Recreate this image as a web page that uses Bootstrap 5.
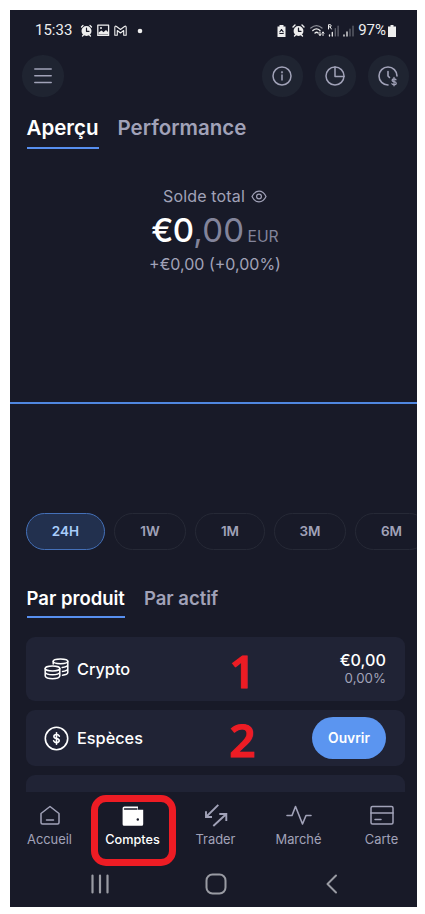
<!DOCTYPE html>
<html lang="fr">
<head>
<meta charset="utf-8">
<meta name="viewport" content="width=device-width, initial-scale=1">
<title>Comptes</title>
<link href="https://cdn.jsdelivr.net/npm/bootstrap@5.3.0/dist/css/bootstrap.min.css" rel="stylesheet">
<style>
body{background:#fff;font-family:Inter,"Liberation Sans",sans-serif;color:#fff}
svg{display:block;flex:none;fill:none;stroke:currentColor;stroke-linecap:round;stroke-linejoin:round;overflow:visible}
.phone{width:407px;height:897px;margin:10px 0 0 10px;background:#181a28;line-height:1}
.muted{color:#a1a2b8}
.status{height:40px;padding:1px 20px 0 25px;font-family:Roboto,sans-serif;font-size:15px;color:#eee}
.status svg{margin-left:5px}
.topbar{height:52px;padding:0 8px 0 12px}
.round-btn{width:41.5px;height:41.5px;background:#1f2431;color:#a1a2b8;border:0;padding:0}
.tabs-main{height:48px;padding-left:16.5px;gap:19px;font-size:20.5px;font-weight:600}
.tabs-sub{height:56px;padding-left:16.5px;gap:19px;font-size:18.5px;font-weight:600}
.tab-item{border-bottom:2.5px solid transparent;white-space:nowrap}
.tab-item.on{border-color:#578ff0;color:#fff}
.tabs-main .tab-item{height:47px;padding-top:15.5px}
.tabs-sub .tab-item{height:37px;padding-top:7.500px}
.balance{height:251.500px;padding:38px 0 0 3px}
.amount{font-size:33px;font-weight:500;letter-spacing:-.8px}
.amount .dec{font-weight:400;color:#83849a;letter-spacing:.3px}
.cur{font-size:15.700px;color:#83849a}
.chart{height:111.500px;border-top:2px solid #5087e0}
.ranges{height:68px;gap:9px;padding-left:16px}
.range{height:37px;border:1px solid #262936;color:#a1a2b8;font-size:13.5px;font-weight:600;flex:none}
.range.on{background:#22304e;border-color:#4470b8;color:#a9cdfb}
.product{background:#202335;border-radius:9px;margin:0 12px 9px 16px;padding:0 19px 0 18px}
.pname{font-size:16.300px;font-weight:500}
.open-btn{width:74px;height:42px;background:#5b95f0;font-size:13.800px;font-weight:600}
.note{top:50%;left:203px;transform:translateY(-48%);font:600 46px "Open Sans","Noto Sans",sans-serif;color:#ed1c24;line-height:1;-webkit-text-stroke:1.200px #ed1c24}
.tabbar{height:70px;padding:12px 0 0 4px;font-size:12.900px}
.tabbar .cell{width:83px;gap:7.500px;flex:none}
.ring{left:0;top:-9px;width:85px;height:71px;border:7px solid #ed1c24;border-radius:15px}
.sysnav{height:44px;color:#999ba3}
</style>
</head>
<body>
<main class="phone d-flex flex-column overflow-hidden">
  <div class="status d-flex align-items-center">
    <span>15:33</span>
    <svg class="ms-2" width="13" height="13" viewBox="0 0 13 13"><circle cx="6.5" cy="7" r="5" fill="#eee" stroke="none"/><path d="M1.500 3l1.500-1.500M11.500 3L10 1.500M2.500 12l1-1M10.500 12l-1-1" stroke-width="1.300"/><path d="M6.5 4.2V7.3H9" stroke="#181a28" stroke-width="1.2"/></svg>
    <svg style="margin-left:4px" width="13" height="13" viewBox="0 0 13 13"><rect x=".8" y="1.2" width="10.800" height="10.2" stroke-width="1.3"/><path d="M1.500 10.500V8.5L4.5 6.500 6.5 8.300 9 6 11 8v2.500z" fill="#eee" stroke="none"/><circle cx="4" cy="4" r="1" fill="#eee" stroke="none"/></svg>
    <svg style="margin-left:4px" width="14" height="12" viewBox="0 0 14 12"><path d="M.8 10.300V2.500Q1 .5 2.500 1.500L6.500 4.500l4-3q1.500-1 1.700 1v7.800H9.700V5.500L6.500 8 3.300 5.500v4.800z" stroke-width="1.100"/></svg>
    <svg style="margin-left:8.500px" width="6" height="6"><circle cx="3" cy="3" r="2.300" fill="#eee" stroke="none"/></svg>
    <svg class="ms-auto" width="9" height="12" viewBox="0 0 9 12"><path d="M2.500 0h4v1.500H8.500V12H.5V1.500h2z" fill="#eee" stroke="none"/><path d="M4.500 4.500L6.200 6.800M4.500 4.500L2.900 6.800M2.800 8.500h3.500" stroke="#181a28" stroke-width="1.100"/></svg>
    <svg style="margin-left:6px" width="13" height="13" viewBox="0 0 13 13"><circle cx="6.500" cy="7" r="4.900" fill="#eee" stroke="none"/><path d="M1 3l2-2M12 3l-2-2M2.500 12l1-1M10.500 12l-1-1" stroke-width="1.400"/><path d="M6.500 4.200V7.300H9" stroke="#181a28" stroke-width="1.300"/></svg>
    <svg width="15" height="13" viewBox="0 0 15 13"><path d="M.8 4Q6.500-.8 12 4" stroke="#8b8d96" stroke-width="1.200"/><path d="M2.800 6.500q3.700-3.300 7.200 0M5 9q1.700-1.500 3.200 0" stroke-width="1.300"/><path d="M10 8v3.500M13 8v3.500M9 10.300l1 1.200 1-1.200M12 9.200L13 8l1 1.200" stroke-width="1"/></svg>
    <svg style="margin-left:3px" width="11" height="14" viewBox="0 0 11 14"><path d="M.5 5V.7h1.700q1 .1 1 1.100t-1 1.100H.5M2.200 3l1.200 2" stroke-width="1"/><path d="M1.500 11v1M4.300 8.500v3.500" stroke-width="1.300"/><path d="M7.300 4.500v7.500M10.100 2v10" stroke="#686a74" stroke-width="1.200"/></svg>
    <svg style="margin-left:4px" width="11" height="14" viewBox="0 0 11 14"><path d="M1 11v1M4 8v4" stroke-width="1.300"/><path d="M7 5v7M10 2v10" stroke="#686a74" stroke-width="1.200"/></svg>
    <span style="margin-left:4px">97%</span>
    <svg style="margin-left:2px;margin-right:1px" width="8" height="12"><path d="M2.500 0h3v1.500H8V12H0V1.500h2.500z" fill="#eee" stroke="none"/></svg>
  </div>

  <header class="topbar d-flex align-items-center">
    <button class="round-btn rounded-circle d-flex align-items-center justify-content-center" aria-label="Menu"><svg width="18" height="18" stroke-width="1.500"><path d="M.8 2h16.400M.8 8.800h16.400M.8 15.600h16.400"/></svg></button>
    <div class="ms-auto d-flex" style="gap:11.500px">
      <button class="round-btn rounded-circle d-flex align-items-center justify-content-center" aria-label="Infos"><svg width="20" height="20" stroke-width="1.500"><circle cx="10" cy="10" r="9"/><path d="M10 9v5"/><circle cx="10" cy="6.300" r=".4"/></svg></button>
      <button class="round-btn rounded-circle d-flex align-items-center justify-content-center" aria-label="Répartition"><svg width="20" height="20" stroke-width="1.500"><circle cx="10" cy="10" r="9"/><path d="M10 1v9.500h9"/></svg></button>
      <button class="round-btn rounded-circle d-flex align-items-center justify-content-center" aria-label="Historique"><svg width="20" height="20" stroke-width="1.600"><path d="M10 19A9 9 0 1 1 19 10M10 5.500v4.500l1.500 1.500"/><path d="M18 13.800q-.6-1-2-1-1.900 0-1.900 1.400 0 1.200 2 1.500 2.100.3 2.100 1.600 0 1.500-2.100 1.500-1.600 0-2.200-1.100M16 11.500v8.300" stroke-width="1.300"/></svg></button>
    </div>
  </header>

  <nav class="tabs-main d-flex muted">
    <div class="tab-item on">Aperçu</div>
    <div class="tab-item">Performance</div>
  </nav>

  <section class="balance d-flex flex-column align-items-center muted">
    <div class="d-flex align-items-center" style="gap:6px;font-size:16px;letter-spacing:.15px"><span>Solde total</span>
      <svg width="16" height="13" stroke="#83849a" stroke-width="1.200"><path d="M1 6.500Q3.500 1.200 8 1.200T15 6.500Q12.500 11.800 8 11.800T1 6.500z"/><circle cx="8" cy="6.500" r="2.400"/></svg></div>
    <div class="d-flex align-items-baseline text-white" style="gap:3px;margin-top:10px"><span class="amount">€0<span class="dec">,00</span></span><span class="cur">EUR</span></div>
    <div style="margin-top:9px;font-size:16px">+€0,00 (+0,00%)</div>
  </section>

  <section class="chart"></section>
  <div class="ranges d-flex">
    <button class="range rounded-pill on" style="width:79px">24H</button>
    <button class="range rounded-pill bg-transparent" style="width:72px">1W</button>
    <button class="range rounded-pill bg-transparent" style="width:70px">1M</button>
    <button class="range rounded-pill bg-transparent" style="width:72px">3M</button>
    <button class="range rounded-pill bg-transparent" style="width:73px">6M</button>
  </div>

  <nav class="tabs-sub d-flex muted">
    <div class="tab-item on">Par produit</div>
    <div class="tab-item">Par actif</div>
  </nav>

  <section class="overflow-hidden flex-shrink-0" style="height:155px">
    <div class="product position-relative d-flex align-items-center" style="height:64px">
      <svg width="25" height="22" stroke-width="1.500"><ellipse cx="8.500" cy="10.500" rx="7.300" ry="2.500"/><path d="M1.200 10.500v7.500q1 2.700 7.300 2.700t7.300-2.700v-7.500M1.200 14.300q1 2.500 7.300 2.500t7.300-2.500"/><ellipse cx="16.500" cy="3.300" rx="7.300" ry="2.400"/><path d="M9.200 3.300V6M23.800 3.300v11.500q-.6 1.900-5.300 2.400M23.800 7q-.8 2-5.600 2.400M23.800 11q-.8 2-5.300 2.400"/></svg>
      <span class="pname" style="margin-left:8px">Crypto</span>
      <div class="ms-auto text-end"><div style="font-size:16.200px;font-weight:500">€0,00</div><div class="muted" style="font-size:13.300px;margin-top:4px">0,00%</div></div>
      <span class="note position-absolute">1</span>
    </div>
    <div class="product position-relative d-flex align-items-center" style="height:56px">
      <svg width="25" height="25" stroke-width="1.600"><circle cx="12.500" cy="12.500" r="11.200"/><path d="M15.300 10.200q-.8-1.700-2.800-1.700-2.600 0-2.600 2 0 1.600 2.600 2t2.700 2.100q0 2-2.700 2-2.200 0-2.900-1.800M12.500 6.800v11.500"/></svg>
      <span class="pname" style="margin-left:8px">Espèces</span>
      <button class="open-btn btn rounded-pill border-0 p-0 ms-auto text-white">Ouvrir</button>
      <span class="note position-absolute">2</span>
    </div>
    <div class="product" style="height:56px"></div>
  </section>

  <nav class="tabbar d-flex muted justify-content-center">
    <div class="cell d-flex flex-column align-items-center"><svg width="22" height="22" stroke-width="1.500"><path d="M2 9.500L11 2.500l9 7V18.500q0 1.500-1.500 1.500h-15Q2 20 2 18.500zM7.500 16h7"/></svg><span>Accueil</span></div>
    <div class="cell d-flex flex-column align-items-center position-relative text-white"><svg width="22" height="22"><path d="M.6 4Q.6 2.500 2.500 2.500H16v3.200h5.200v14.500q0 1.500-1.500 1.500H2.100q-1.500 0-1.500-1.500z" fill="#fff" stroke="none"/><path d="M2.500 5h12.500" stroke="#181a28" stroke-width="1.300"/><circle cx="15.800" cy="15.500" r="1.200" fill="#181a28" stroke="none"/></svg><span style="font-weight:500;font-size:12.700px">Comptes</span><div class="ring position-absolute"></div></div>
    <div class="cell d-flex flex-column align-items-center"><svg width="24" height="22" stroke-width="1.900"><path d="M14.300.8L2 13M2 7.300V13H8M9.300 22L22.300 10M15.300 10H22.300v7" stroke-linecap="butt" stroke-linejoin="miter"/></svg><span>Trader</span></div>
    <div class="cell d-flex flex-column align-items-center"><svg width="26" height="22" stroke-width="1.600"><path d="M1 11.500h5L9.500 2.500l7 17.500 3.500-8.500h5"/></svg><span>Marché</span></div>
    <div class="cell d-flex flex-column align-items-center"><svg width="24" height="22" stroke-width="1.500"><rect x="1" y="2.500" width="22" height="17.500" rx="1.500"/><path d="M1 9h22M5 15.500h6"/></svg><span>Carte</span></div>
  </nav>

  <div class="sysnav d-flex align-items-center">
    <svg style="margin-left:80px" width="20" height="20" stroke-width="2.200"><path d="M2.500 1.500v17M10 1.500v17M17.500 1.500v17"/></svg>
    <svg style="margin-left:95px" width="22" height="22" stroke-width="2"><rect x="1.500" y="1.500" width="19" height="19" rx="6"/></svg>
    <svg style="margin-left:98px" width="14" height="20" stroke-width="2"><path d="M11 1.500L2.500 10l8.500 8.500"/></svg>
  </div>
</main>
<script src="https://cdn.jsdelivr.net/npm/bootstrap@5.3.0/dist/js/bootstrap.bundle.min.js"></script>
</body>
</html>
